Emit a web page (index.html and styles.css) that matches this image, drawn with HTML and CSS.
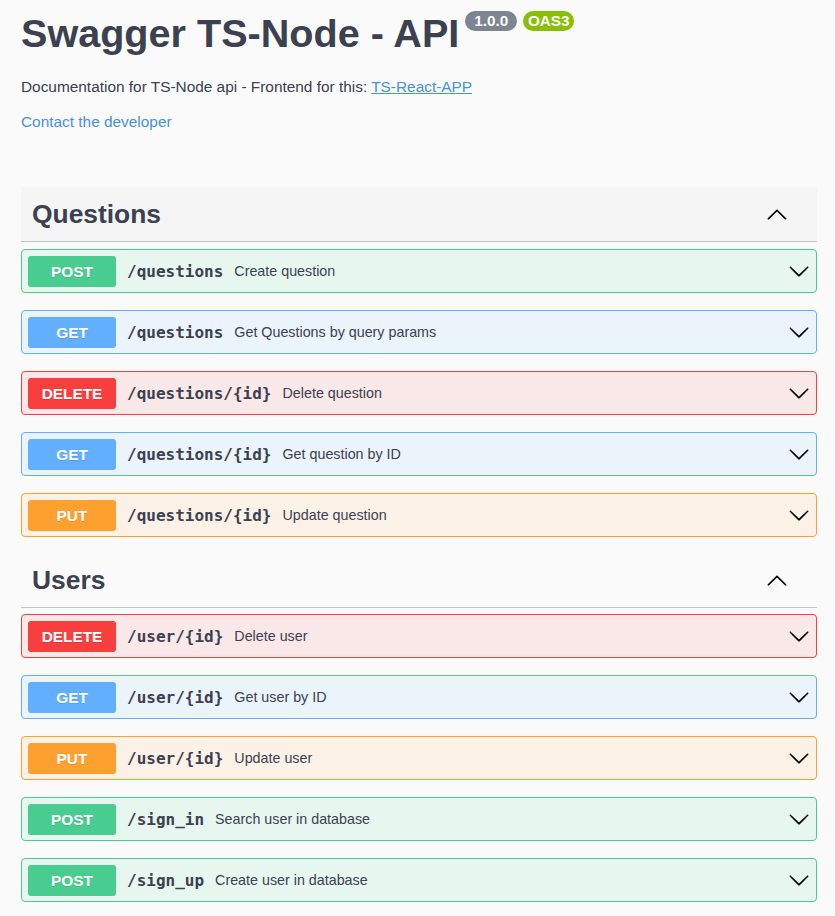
FILE: index.html
```html
<!DOCTYPE html>
<html lang="en">
<head>
<meta charset="utf-8">
<title>Swagger TS-Node - API</title>
<link rel="stylesheet" href="styles.css">
</head>
<body>
<div class="wrapper">
  <div class="info">
    <div class="title-row">
      <h2 class="title">Swagger TS-Node - API</h2>
      <span class="badge badge-version">1.0.0</span>
      <span class="badge badge-oas">OAS3</span>
    </div>
    <p class="desc">Documentation for TS-Node api - Frontend for this: <a class="link" href="#">TS-React-APP</a></p>
    <p class="contact"><a class="contact-link" href="#">Contact the developer</a></p>
  </div>

  <section class="tag-section">
    <h3 class="tag tag-hover">
      <span class="tag-name">Questions</span>
      <svg class="arrow-up" width="22" height="22" viewBox="0 0 20 20"><path d="M17.418 14.908c.272.268.709.268.979 0s.271-.701 0-.969l-7.908-7.83c-.27-.268-.707-.268-.979 0l-7.908 7.83c-.27.268-.27.701 0 .969.271.268.709.268.979 0L10 7.767l7.418 7.141z"/></svg>
    </h3>
    <div class="opblock post">
      <span class="method">POST</span><span class="path">/questions</span><span class="summary">Create question</span>
      <svg class="arrow" width="22" height="22" viewBox="0 0 20 20"><path d="M17.418 6.109c.272-.268.709-.268.979 0s.271.701 0 .969l-7.908 7.83c-.27.268-.707.268-.979 0l-7.908-7.83c-.27-.268-.27-.701 0-.969.271-.268.709-.268.979 0L10 13.25l7.418-7.141z"/></svg>
    </div>
    <div class="opblock get">
      <span class="method">GET</span><span class="path">/questions</span><span class="summary">Get Questions by query params</span>
      <svg class="arrow" width="22" height="22" viewBox="0 0 20 20"><path d="M17.418 6.109c.272-.268.709-.268.979 0s.271.701 0 .969l-7.908 7.83c-.27.268-.707.268-.979 0l-7.908-7.83c-.27-.268-.27-.701 0-.969.271-.268.709-.268.979 0L10 13.25l7.418-7.141z"/></svg>
    </div>
    <div class="opblock delete">
      <span class="method">DELETE</span><span class="path">/questions/{id}</span><span class="summary">Delete question</span>
      <svg class="arrow" width="22" height="22" viewBox="0 0 20 20"><path d="M17.418 6.109c.272-.268.709-.268.979 0s.271.701 0 .969l-7.908 7.83c-.27.268-.707.268-.979 0l-7.908-7.83c-.27-.268-.27-.701 0-.969.271-.268.709-.268.979 0L10 13.25l7.418-7.141z"/></svg>
    </div>
    <div class="opblock get">
      <span class="method">GET</span><span class="path">/questions/{id}</span><span class="summary">Get question by ID</span>
      <svg class="arrow" width="22" height="22" viewBox="0 0 20 20"><path d="M17.418 6.109c.272-.268.709-.268.979 0s.271.701 0 .969l-7.908 7.83c-.27.268-.707.268-.979 0l-7.908-7.83c-.27-.268-.27-.701 0-.969.271-.268.709-.268.979 0L10 13.25l7.418-7.141z"/></svg>
    </div>
    <div class="opblock put">
      <span class="method">PUT</span><span class="path">/questions/{id}</span><span class="summary">Update question</span>
      <svg class="arrow" width="22" height="22" viewBox="0 0 20 20"><path d="M17.418 6.109c.272-.268.709-.268.979 0s.271.701 0 .969l-7.908 7.83c-.27.268-.707.268-.979 0l-7.908-7.83c-.27-.268-.27-.701 0-.969.271-.268.709-.268.979 0L10 13.25l7.418-7.141z"/></svg>
    </div>
  </section>

  <section class="tag-section">
    <h3 class="tag">
      <span class="tag-name">Users</span>
      <svg class="arrow-up" width="22" height="22" viewBox="0 0 20 20"><path d="M17.418 14.908c.272.268.709.268.979 0s.271-.701 0-.969l-7.908-7.83c-.27-.268-.707-.268-.979 0l-7.908 7.83c-.27.268-.27.701 0 .969.271.268.709.268.979 0L10 7.767l7.418 7.141z"/></svg>
    </h3>
    <div class="opblock delete">
      <span class="method">DELETE</span><span class="path">/user/{id}</span><span class="summary">Delete user</span>
      <svg class="arrow" width="22" height="22" viewBox="0 0 20 20"><path d="M17.418 6.109c.272-.268.709-.268.979 0s.271.701 0 .969l-7.908 7.83c-.27.268-.707.268-.979 0l-7.908-7.83c-.27-.268-.27-.701 0-.969.271-.268.709-.268.979 0L10 13.25l7.418-7.141z"/></svg>
    </div>
    <div class="opblock get">
      <span class="method">GET</span><span class="path">/user/{id}</span><span class="summary">Get user by ID</span>
      <svg class="arrow" width="22" height="22" viewBox="0 0 20 20"><path d="M17.418 6.109c.272-.268.709-.268.979 0s.271.701 0 .969l-7.908 7.83c-.27.268-.707.268-.979 0l-7.908-7.83c-.27-.268-.27-.701 0-.969.271-.268.709-.268.979 0L10 13.25l7.418-7.141z"/></svg>
    </div>
    <div class="opblock put">
      <span class="method">PUT</span><span class="path">/user/{id}</span><span class="summary">Update user</span>
      <svg class="arrow" width="22" height="22" viewBox="0 0 20 20"><path d="M17.418 6.109c.272-.268.709-.268.979 0s.271.701 0 .969l-7.908 7.83c-.27.268-.707.268-.979 0l-7.908-7.83c-.27-.268-.27-.701 0-.969.271-.268.709-.268.979 0L10 13.25l7.418-7.141z"/></svg>
    </div>
    <div class="opblock post">
      <span class="method">POST</span><span class="path">/sign_in</span><span class="summary">Search user in database</span>
      <svg class="arrow" width="22" height="22" viewBox="0 0 20 20"><path d="M17.418 6.109c.272-.268.709-.268.979 0s.271.701 0 .969l-7.908 7.83c-.27.268-.707.268-.979 0l-7.908-7.83c-.27-.268-.27-.701 0-.969.271-.268.709-.268.979 0L10 13.25l7.418-7.141z"/></svg>
    </div>
    <div class="opblock post">
      <span class="method">POST</span><span class="path">/sign_up</span><span class="summary">Create user in database</span>
      <svg class="arrow" width="22" height="22" viewBox="0 0 20 20"><path d="M17.418 6.109c.272-.268.709-.268.979 0s.271.701 0 .969l-7.908 7.83c-.27.268-.707.268-.979 0l-7.908-7.83c-.27-.268-.27-.701 0-.969.271-.268.709-.268.979 0L10 13.25l7.418-7.141z"/></svg>
    </div>
  </section>
</div>
</body>
</html>
```

FILE: styles.css
```css
html, body {
  margin: 0;
  padding: 0;
  background: #fafafa;
}

body {
  font-family: "Liberation Sans", Arial, sans-serif;
  color: #3b4151;
}

.wrapper {
  padding: 10px 18px 0 21px;
}

.title-row {
  display: flex;
  align-items: flex-start;
  height: 46px;
}

.title {
  margin: 0;
  font-size: 39.6px;
  line-height: 46px;
  font-weight: 700;
  color: #3b4151;
}

.badge {
  margin-top: 1px;
  margin-left: 6px;
  height: 20px;
  line-height: 20px;
  border-radius: 57px;
  color: #fff;
  font-size: 15.3px;
  font-weight: 700;
}

.badge-version {
  margin-left: 6px;
  padding: 0 9px;
  background: #7d8492;
}

.badge-oas {
  padding: 0 4.5px;
  background: #89bf04;
}

.desc {
  margin: 22px 0 0;
  font-size: 15.4px;
  line-height: 18px;
}

.link {
  color: #4990e2;
  text-decoration: underline;
}

.contact {
  margin: 17px 0 0;
  font-size: 15.4px;
  line-height: 18px;
}

.contact-link {
  color: #4990e2;
  text-decoration: none;
}

.tag-section:first-of-type {
  margin-top: 56px;
}

.tag {
  display: flex;
  align-items: center;
  height: 54px;
  margin: 0 0 6px;
  padding: 0 29px 0 11px;
  border-bottom: 1px solid #c1c3c7;
  font-size: 26.4px;
  font-weight: 700;
  color: #3b4151;
}

.tag-hover {
  margin-bottom: 7px;
  background: #f5f5f5;
}

.tag-name {
  flex: 1;
}

.arrow-up,
.arrow {
  fill: #000;
  flex: none;
}

.opblock {
  display: flex;
  align-items: center;
  margin: 0 0 17px;
  padding: 5.5px 6.5px 5.5px 6px;
  border: 1px solid;
  border-radius: 4px;
}

.tag-section:first-of-type .opblock:last-child {
  margin-bottom: 16px;
}

.method {
  min-width: 88px;
  height: 31px;
  line-height: 31px;
  border-radius: 3px;
  color: #fff;
  font-size: 15.4px;
  font-weight: 700;
  text-align: center;
  text-shadow: 0 1px 0 rgba(0, 0, 0, 0.1);
}

.path {
  padding: 0 11px;
  font-family: "DejaVu Sans Mono", "Liberation Mono", monospace;
  font-size: 16px;
  font-weight: 700;
  color: #3b4151;
}

.summary {
  flex: 1;
  font-size: 14.3px;
  color: #3b4151;
}

.post { border-color: #49cc90; background: #e8f6f0; }
.post .method { background: #49cc90; }

.get { border-color: #61affe; background: #ebf3fb; }
.get .method { background: #61affe; }

.delete { border-color: #f93e3e; background: #fae7e7; }
.delete .method { background: #f93e3e; }

.put { border-color: #fca130; background: #fbf1e6; }
.put .method { background: #fca130; }
```
